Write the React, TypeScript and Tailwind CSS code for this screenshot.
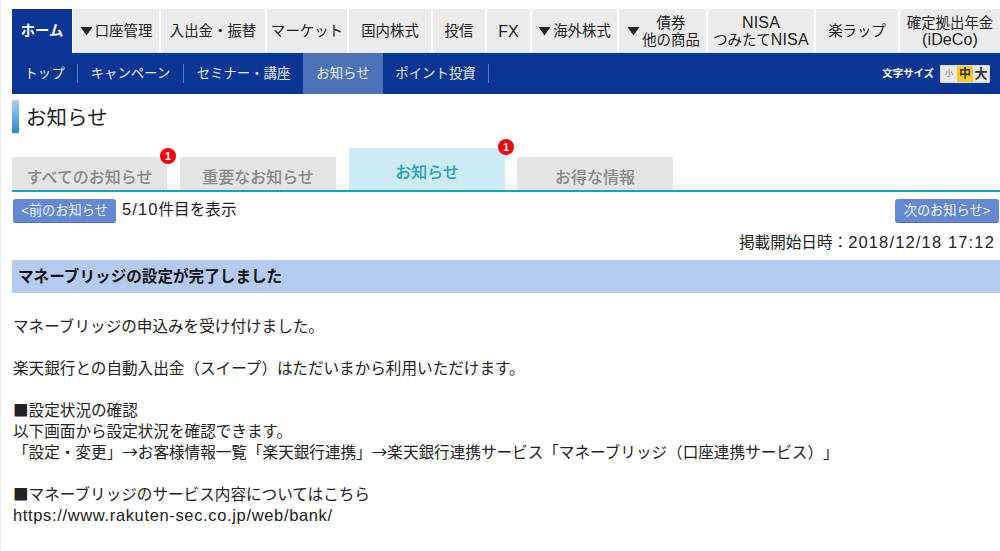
function Tri() {
  return <svg width="13" height="10" viewBox="0 0 13 10" className="shrink-0"><path d="M0.5 1h12L6.5 9.5z" fill="#222" /></svg>;
}
function Badge() {
  return <span className="absolute -top-[9px] -right-[9px] w-[16px] h-[16px] rounded-full bg-[#f2000f] text-white text-[11px] font-bold leading-[16px] text-center">1</span>;
}
function L({ children, t = "text-[16px] tracking-[0.2px]" }: { children: React.ReactNode; t?: string }) {
  return <span className={`${t} leading-none`}>{children}</span>;
}
function C({ children }: { children: React.ReactNode }) {
  return <span className="font-['Noto_Sans_CJK_JP',sans-serif] leading-none">{children}</span>;
}
const top = [
  ["w-[86px]", "口座管理", true], ["w-[104px]", "入出金・振替"], ["w-[80px]", "マーケット"], ["w-[82px]", "国内株式"], ["w-[52px]", "投信"], ["w-[43px]", "FX"], ["w-[85px]", "海外株式", true],
] as const;
export default function App() {
  return (
    <div className="w-[1000px] h-[551px] overflow-hidden bg-white border-l border-[#efefef] pl-[11px] pt-[9px] text-[#222] [text-spacing-trim:space-all] font-['Liberation_Sans','Noto_Sans_CJK_JP',sans-serif]">
      <div className="flex gap-[2px] h-[44px] text-[14.4px] leading-[17px] items-stretch">
        <div className="w-[60px] -mr-[1px] bg-[#0a3595] text-white font-bold flex items-center justify-center">ホーム</div>
        {top.map(([w, t, tri]) => (
          <div key={t} className={`${w} bg-[#ebebeb] flex items-center justify-center gap-[2px]`}>
            {tri ? <Tri /> : null}<span className={t === "FX" ? "text-[16px]" : ""}>{t}</span>
          </div>
        ))}
        <div className="w-[87px] bg-[#ebebeb] flex items-center pl-[8px]">
          <Tri /><span className="flex-1 text-center pr-[4px] pt-[1px]">債券<br />他の商品</span>
        </div>
        <div className="w-[106px] bg-[#ebebeb] flex items-center justify-center text-center"><span className="pt-[2px]"><L>NISA</L><br />つみたて<L>NISA</L></span></div>
        <div className="w-[82px] bg-[#ebebeb] flex items-center justify-center">楽ラップ</div>
        <div className="flex-1 bg-[#ebebeb] flex items-center justify-center text-center"><span className="pt-[1px]">確定拠出年金<br /><L t="text-[16px] tracking-[0.1px]">(iDeCo)</L></span></div>
      </div>
      <div className="h-[41px] bg-[#0a3595] flex items-center text-white/90 text-[13.4px] pr-[10px]">
        <div className="w-[66px] h-[19px] pt-[1px] flex items-center justify-center border-r border-[#5a7ab8]">トップ</div>
        <div className="w-[106px] h-[19px] pt-[1px] flex items-center justify-center border-r border-[#5a7ab8]">キャンペーン</div>
        <div className="w-[119px] h-[19px] pt-[1px] flex items-center justify-center">セミナー・講座</div>
        <div className="w-[80px] h-full bg-[#4d72b8] pt-[1px] flex items-center justify-center">お知らせ</div>
        <div className="w-[106px] h-[19px] pt-[1px] flex items-center justify-center border-r border-[#5a7ab8]">ポイント投資</div>
        <div className="ml-auto flex items-center gap-[6px]">
          <span className="text-[10.4px] font-bold text-white">文字サイズ</span>
          <div className="flex w-[50px] h-[18px] bg-white rounded-[1px] border border-[#dddddd] text-center leading-[16px]">
            <span className="flex-1 bg-[#e8e8e8] text-[#777] text-[8px]">小</span>
            <span className="flex-1 bg-[#fdc91a] text-[#333] text-[12px] font-bold">中</span>
            <span className="flex-1 bg-[#e8e8e8] text-[#333] text-[13px] font-bold">大</span>
          </div>
        </div>
      </div>
      <div className="flex items-center h-[33px] mt-[6px] gap-[7px]">
        <div className="w-[7px] h-[33px] bg-gradient-to-b from-[#a6d0f2] to-[#2487cf]" />
        <h1 className="text-[20.5px] text-[#222] pt-[3px]">お知らせ</h1>
      </div>
      <div className="flex items-end h-[43px] mt-[14px] text-[16px] font-medium">
        <div className="relative w-[155px] h-[33px] bg-[#e4e4e4] text-[#888] flex items-center justify-center pt-[8px]">すべてのお知らせ<Badge /></div>
        <div className="w-[156px] h-[33px] ml-[13px] bg-[#e4e4e4] text-[#888] flex items-center justify-center pt-[8px]">重要なお知らせ</div>
        <div className="relative w-[156px] h-[42px] ml-[13px] bg-[#cdebf2] text-[#1ba2c4] flex items-center justify-center pt-[8px]">お知らせ<Badge /></div>
        <div className="w-[156px] h-[33px] ml-[12px] bg-[#e4e4e4] text-[#888] flex items-center justify-center pt-[8px]">お得な情報</div>
      </div>
      <div className="h-[2px] bg-[#12a5c5]" />
      <div className="flex items-start mt-[7px] h-[24px] text-[15.6px]">
        <div className="ml-[1px] w-[103px] h-[24px] rounded-[3px] bg-[#6488d2] border-b border-[#4f73bd] text-white/90 text-[13.2px] flex items-center justify-center">&lt;前のお知らせ</div>
        <span className="ml-[6px] -mt-[1px]"><L t="text-[16.5px] tracking-[1.1px]">5/10</L>件目を表示</span>
        <div className="ml-auto mr-[1px] w-[104px] h-[24px] rounded-[3px] bg-[#6488d2] border-b border-[#4f73bd] text-white/90 text-[13.2px] flex items-center justify-center">次のお知らせ&gt;</div>
      </div>
      <div className="text-right text-[15.6px] leading-[20px] pr-[5px] mt-[10px]">掲載開始日時：<L t="text-[16.5px] tracking-[1.15px]">2018/12/18 17:12</L></div>
      <div className="h-[33px] mt-[7px] bg-[#b5caf0] flex items-center pl-[6px] text-[15.6px] font-bold text-[#111]">マネーブリッジの設定が完了しました</div>
      <div className="mt-[23px] pl-[1px] text-[15.6px] leading-[21px] text-[#222]">
        <div>マネーブリッジの申込みを受け付けました。</div>
        <div className="h-[21px]" />
        <div>楽天銀行との自動入出金（スイープ）はただいまから利用いただけます。</div>
        <div className="h-[21px]" />
        <div><C>■</C>設定状況の確認</div>
        <div>以下画面から設定状況を確認できます。</div>
        <div className="whitespace-nowrap">「設定・変更」<C>→</C>お客様情報一覧「楽天銀行連携」<C>→</C>楽天銀行連携サービス「マネーブリッジ（口座連携サービス）」</div>
        <div className="h-[21px]" />
        <div><C>■</C>マネーブリッジのサービス内容についてはこちら</div>
        <div><L t="text-[16.5px] tracking-[0.65px]">https://www.rakuten-sec.co.jp/web/bank/</L></div>
      </div>
    </div>
  );
}
